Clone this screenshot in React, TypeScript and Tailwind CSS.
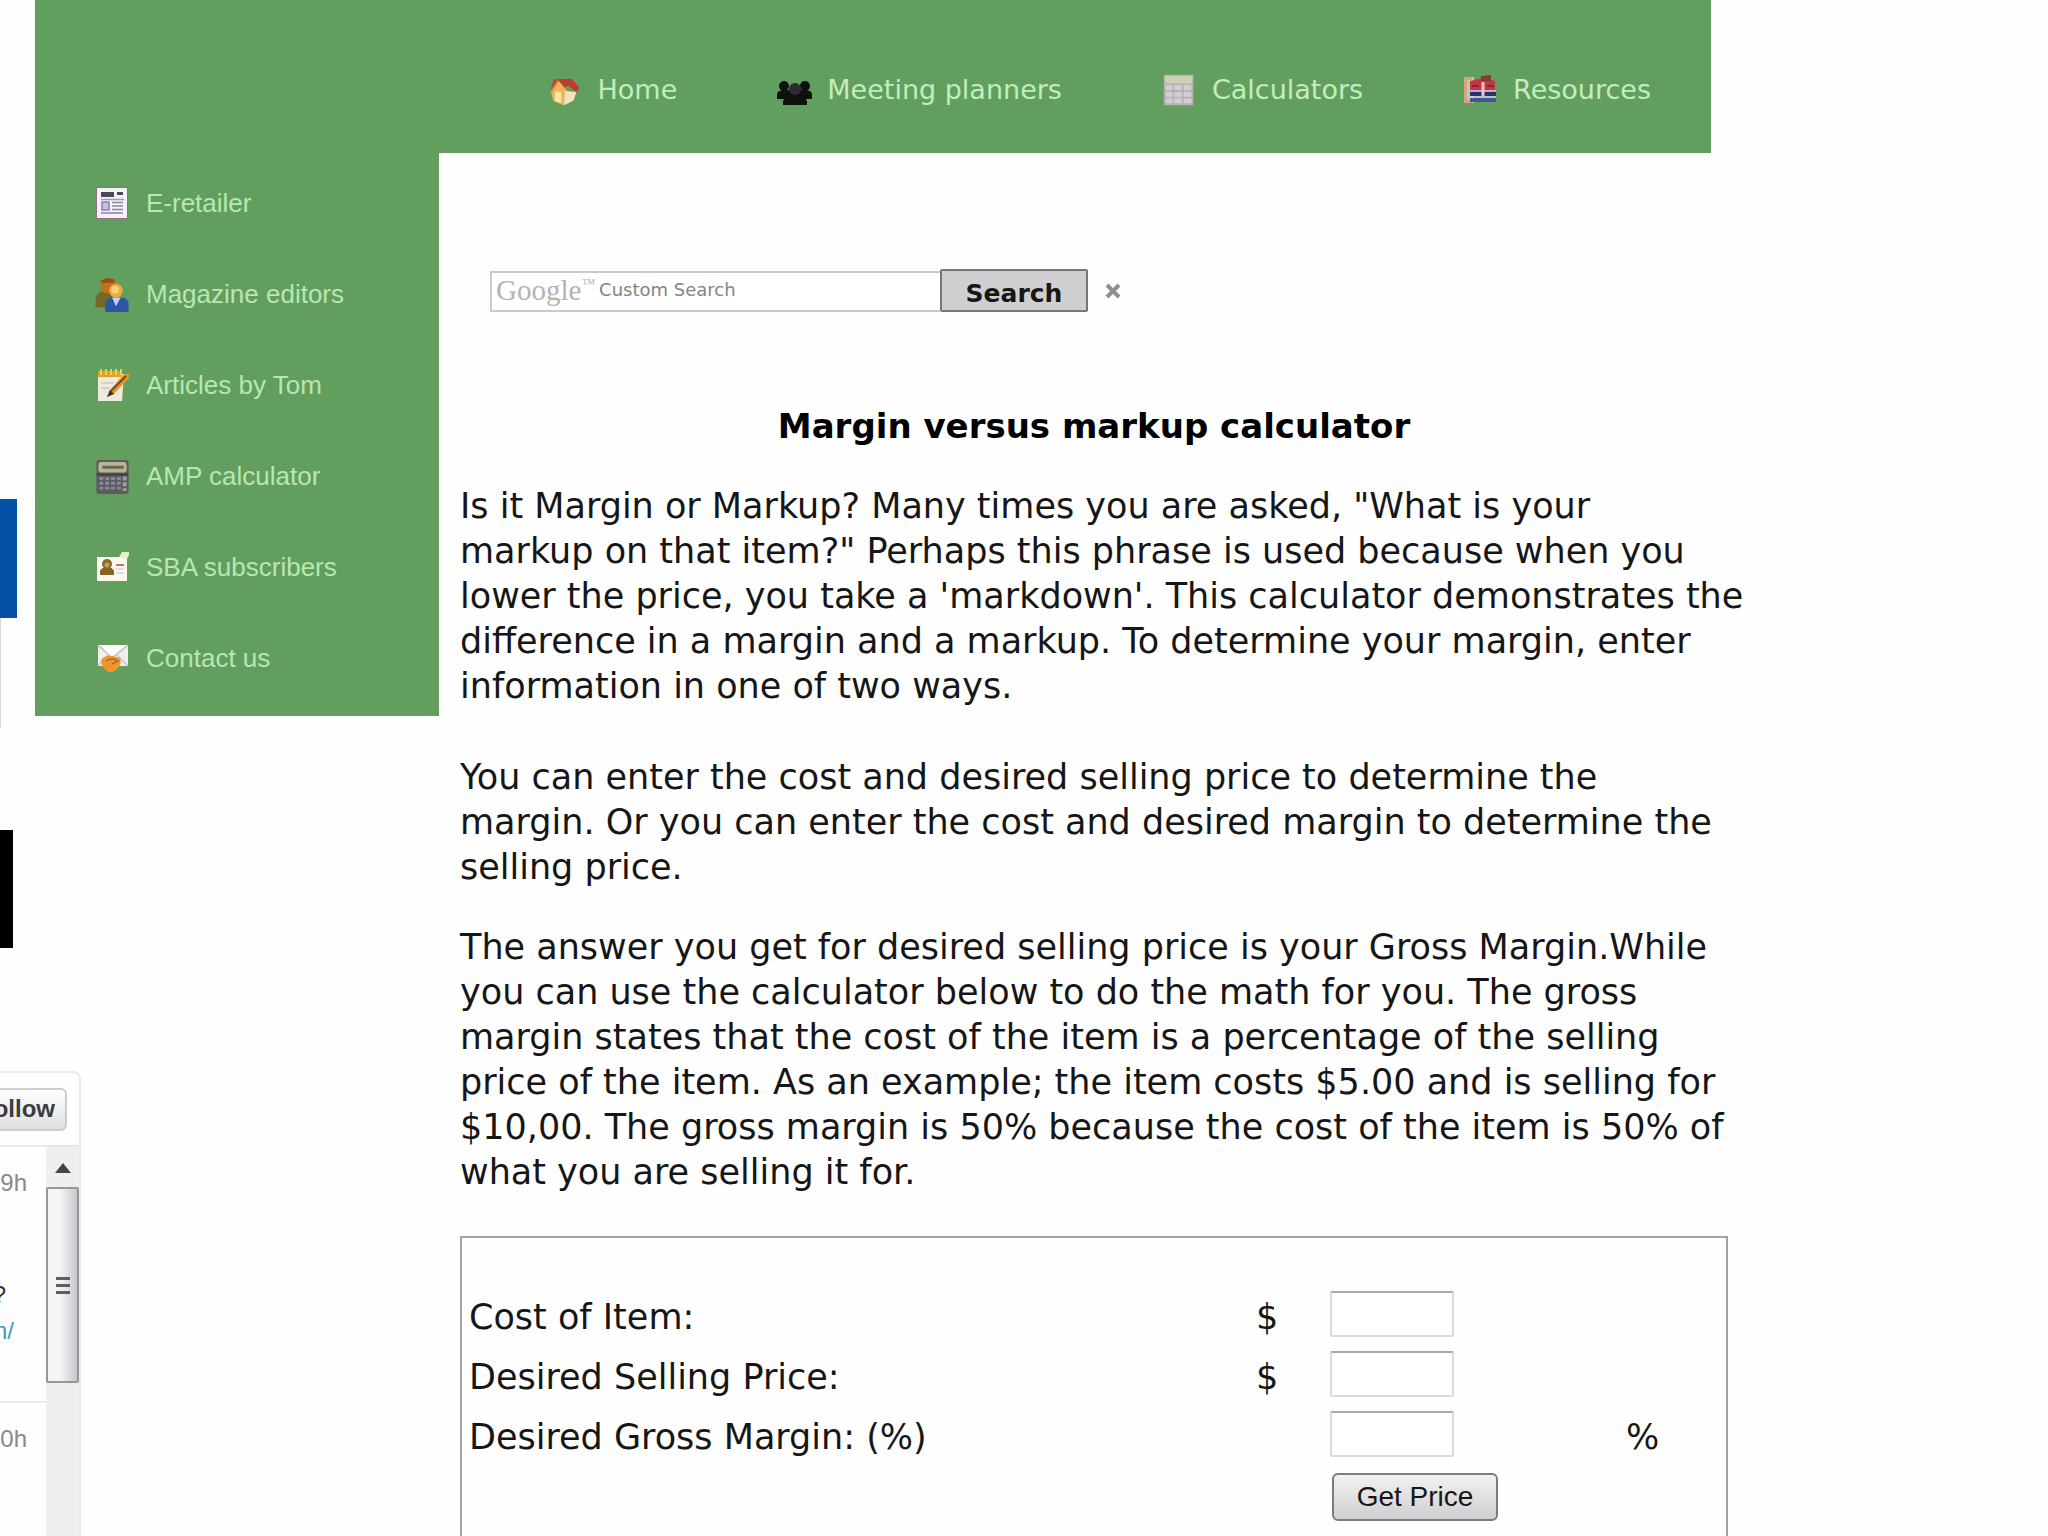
import type { FormEvent, ReactNode } from 'react';
import { useState } from 'react';

type NavItem = { label: string; icon: ReactNode };

const HomeIcon = () => (
  <svg viewBox="0 -1 38 38" className="size-9 shrink-0">
    <path d="M6 7 L24 6 L33 16 L31 19 L22 13 L8 20 L3 17 Z" fill="#b8412f" />
    <path d="M12 7 L25 6 L33 16 L30 20 Z" fill="#c13a30" />
    <path d="M11 8 L3 20 L6 30 L17 34 L21 20 Z" fill="#f0b25c" />
    <path d="M18 19 L30 20 L27 29 L17 34 Z" fill="#f6e3c4" />
    <path d="M8 19 L14 21 L14 32 L7 29 Z" fill="#fbe9a6" />
    <path d="M11 8 L3 20" stroke="#c98a4a" strokeWidth="2" />
  </svg>
);

const PeopleIcon = () => (
  <svg viewBox="0 0 36 36" className="size-9 shrink-0" fill="#0d120d">
    <circle cx="7" cy="14" r="5" />
    <circle cx="28" cy="14" r="5" />
    <path d="M0 27 V22 Q1 18 7 18 H28 Q34 18 35 22 V27 Z" />
    <circle cx="18" cy="17" r="6" fill="#2a2c31" />
    <path d="M6 33 V29 Q8 23 18 23 Q28 23 30 29 V33 Z" />
  </svg>
);

const SheetIcon = () => (
  <svg viewBox="0 0 38 38" className="size-9 shrink-0">
    <rect x="2" y="3" width="31" height="32" rx="1" fill="#b7b3b4" />
    <rect x="3" y="4" width="29" height="8" fill="#cfcfb9" />
    <path d="M4 14h7v5H4zM13 14h8v5h-8zM23 14h8v5h-8zM4 21h7v5H4zM13 21h8v5h-8zM23 21h8v5h-8zM4 28h7v5H4zM13 28h8v5h-8zM23 28h8v5h-8z" fill="#d3cdd8" />
  </svg>
);

const BooksIcon = () => (
  <svg viewBox="0 0 36 36" className="size-9 shrink-0">
    <path d="M1 5 H11 V31 H1 Z" fill="#c8c7a0" />
    <path d="M1 5 H9 V8 H4 V28 H9 V31 H1 Z" fill="#d9a282" />
    <path d="M7 9 L20 6 L32 9 V20 H7 Z" fill="#c93444" />
    <path d="M18 4 L28 3 V9 H18 Z" fill="#8b3a2c" />
    <path d="M7 19 H33 V24 H7 Z" fill="#25346f" />
    <path d="M7 26 H33 V30 H7 Z" fill="#3f5596" />
    <path d="M7 19 H33 M7 25 H33" stroke="#d9d5e6" strokeWidth="1.500" />
    <path d="M20 10 V24" stroke="#e8c4cc" strokeWidth="3" />
    <path d="M9 14 H16 M24 14 H31" stroke="#792b4d" strokeWidth="2" />
  </svg>
);

const NewspaperIcon = () => (
  <svg viewBox="0 0 36 36" className="size-9 shrink-0">
    <rect x="1" y="2" width="32" height="32" rx="1" fill="#8f6f86" />
    <rect x="2" y="3" width="30" height="30" fill="#f5f2f7" />
    <path d="M6 7 H19 V12 H6 Z M22 7 H28 V10 H22 Z" fill="#4a4a55" />
    <path d="M6 14.500 H29" stroke="#a79cb5" strokeWidth="1.500" />
    <rect x="7" y="17" width="7" height="8" fill="#c7bfe3" stroke="#8a80b4" strokeWidth="1.500" />
    <path d="M17 17.500 H28 M17 21 H28 M17 24.500 H28 M6 28 H28" stroke="#8d84a2" strokeWidth="1.500" />
  </svg>
);

const EditorsIcon = () => (
  <svg viewBox="0 -1 36 37" className="size-9 shrink-0">
    <path d="M0 31 V23 Q1 16 7 15 L19 18 L13 31 Z" fill="#6f6a2a" />
    <path d="M5 4 Q12 -1 20 3 L21 13 Q14 20 6 15 Z" fill="#c5701c" />
    <path d="M5 4 Q13 -1 20 3 L18 6 H6 Z" fill="#9a4d12" />
    <path d="M10 36 V28 Q11 22 17 21 H28 Q34 22 34 28 V36 Z" fill="#2f55a5" />
    <path d="M17 21 L21 30 L26 21 Z" fill="#bcd5f2" />
    <circle cx="21" cy="14" r="7" fill="#f2a93b" />
    <circle cx="20" cy="13" r="4" fill="#f9cf7a" />
  </svg>
);

const NotepadIcon = () => (
  <svg viewBox="0 0 36 36" className="size-9 shrink-0">
    <path d="M3 7 H29 L27 34 H3 Z" fill="#efe9e0" />
    <path d="M3 4 H27 V10 H3 Z" fill="#e0a32a" />
    <path d="M6 2 V8 M11 2 V8 M16 2 V8 M21 2 V8 M26 2 V8" stroke="#f4cf4c" strokeWidth="2" />
    <path d="M6 16 H19 M6 21 H15" stroke="#cfc8c4" strokeWidth="1.500" />
    <path d="M34 7 L29 7 L15 23 L12 30 L19 27 L34 11 Z" fill="#e09a2c" />
    <path d="M31 9 L15 25" stroke="#7c4a1c" strokeWidth="2" />
    <path d="M15 23 L12 30 L19 27 Z" fill="#4b2f2a" />
  </svg>
);

const CalculatorIcon = () => (
  <svg viewBox="0 -1 36 37" className="size-9 shrink-0">
    <rect x="1" y="1" width="33" height="35" rx="2" fill="#5c5c5e" />
    <rect x="3" y="3" width="29" height="11" rx="3" fill="#b7b492" />
    <path d="M7 8.500 H29" stroke="#6a6553" strokeWidth="3" />
    <path d="M1 16 H34" stroke="#3f4146" strokeWidth="2" />
    <path d="M4 20 H26 M4 25 H26 M4 30 H26" stroke="#8a86a0" strokeWidth="3" strokeDasharray="4 2" />
    <path d="M30 18 V33" stroke="#a39e9c" strokeWidth="4" strokeDasharray="4 2" />
  </svg>
);

const CardIcon = () => (
  <svg viewBox="0 0 36 36" className="size-9 shrink-0">
    <path d="M2 8 H32 V32 H2 Z" fill="#fbf8ef" />
    <path d="M24 8 L27 3 L34 3 L34 6 L32 10 Z" fill="#dff3c0" />
    <circle cx="12" cy="15" r="5" fill="#8a6a24" />
    <path d="M5 26 V22 Q7 18 12 18 Q17 18 19 22 V26 Z" fill="#84651f" />
    <circle cx="12" cy="16" r="2.500" fill="#c79f5b" />
    <path d="M21 16 H29" stroke="#c76f5e" strokeWidth="2" />
    <path d="M21 20 H29 M21 24 H29" stroke="#d8d2d2" strokeWidth="1.500" />
  </svg>
);

const MailIcon = () => (
  <svg viewBox="0 0 36 36" className="size-9 shrink-0">
    <path d="M3 5 H33 V26 H3 Z" fill="#f1eeee" />
    <path d="M3 5 L17 18 L33 5" fill="#fdfdfd" stroke="#c9bcb8" strokeWidth="1.500" />
    <path d="M3 26 L13 15 M33 26 L22 15" stroke="#cfc5c2" strokeWidth="1.500" />
    <path d="M6 20 Q10 15 18 16 L25 18 Q27 23 23 28 Q19 33 14 32 Q7 30 6 20 Z" fill="#ef942e" />
    <path d="M11 21 Q17 17 23 21 L17 24" fill="none" stroke="#b9681c" strokeWidth="1.500" />
  </svg>
);

const TOP_LINKS: NavItem[] = [
  { label: 'Home', icon: <HomeIcon /> },
  { label: 'Meeting planners', icon: <PeopleIcon /> },
  { label: 'Calculators', icon: <SheetIcon /> },
  { label: 'Resources', icon: <BooksIcon /> },
];

const SIDE_LINKS: NavItem[] = [
  { label: 'E-retailer', icon: <NewspaperIcon /> },
  { label: 'Magazine editors', icon: <EditorsIcon /> },
  { label: 'Articles by Tom', icon: <NotepadIcon /> },
  { label: 'AMP calculator', icon: <CalculatorIcon /> },
  { label: 'SBA subscribers', icon: <CardIcon /> },
  { label: 'Contact us', icon: <MailIcon /> },
];

const FIELDS = [
  { id: 'cost', label: 'Cost of Item:', prefix: '$', suffix: '' },
  { id: 'price', label: 'Desired Selling Price:', prefix: '$', suffix: '' },
  { id: 'margin', label: 'Desired Gross Margin: (%)', prefix: '', suffix: '%' },
];

// Twitter timeline, cut off by the left edge of the window
function Timeline() {
  return (
    <section className="flex w-[81px] flex-1 flex-col overflow-hidden rounded-tr-lg border-t-2 border-r-2 border-[#ebe9ed] font-['Liberation_Sans',Arial,sans-serif]">
      <div className="flex h-[74px] shrink-0 items-center justify-end border-b-2 border-[#e9e7ea] pr-3">
        <button className="flex h-[43px] w-24 shrink-0 items-center justify-end rounded-md border-2 border-[#cfcdd0] bg-linear-to-b from-white to-[#dedde0] pr-[10px] text-2xl font-bold text-[#3c3b3e]">
          Follow
        </button>
      </div>
      <div className="flex flex-1">
        <div className="flex w-[46px] shrink-0 flex-col text-2xl text-[#8a898c]">
          <div className="flex h-[256px] flex-col items-end border-b-2 border-[#e6e9ee] pt-5">
            <span className="pr-[19px]">9h</span>
            <span className="pt-20 pr-10 text-[#333]">?</span>
            <a href="#link" className="pt-1 pr-8 text-[#3d9ec0]">n/</a>
          </div>
          <span className="self-end pt-5 pr-[19px]">0h</span>
        </div>
        <div className="flex flex-1 flex-col items-center bg-[#f0eef1]">
          <svg viewBox="0 0 16 10" className="mt-4 h-[10px] w-4 shrink-0">
            <path d="M0 10 L8 0 L16 10 Z" fill="#454447" />
          </svg>
          <div className="mt-[14px] flex h-[196px] w-full shrink-0 flex-col items-center justify-center gap-1 rounded-xs border-2 border-[#98969a] bg-linear-to-r from-[#f5f4f6] from-40% to-[#c9c7cb]">
            <span className="h-[3px] w-[14px] bg-[#5f5e62]" />
            <span className="h-[3px] w-[14px] bg-[#5f5e62]" />
            <span className="h-[3px] w-[14px] bg-[#5f5e62]" />
          </div>
        </div>
      </div>
    </section>
  );
}

function LeftRail() {
  return (
    <div className="flex w-[35px] shrink-0 flex-col">
      <div className="mt-[499px] h-[119px] w-[17px] bg-[#0552a5]" />
      <div className="h-[110px] w-px bg-[#d9d7dc]" />
      <div className="mt-[102px] mb-[123px] h-[118px] w-[13px] bg-black" />
      <Timeline />
    </div>
  );
}

function SearchBar() {
  const [query, setQuery] = useState('');

  return (
    <form className="flex items-end pl-[30px]" onSubmit={(e: FormEvent) => e.preventDefault()}>
      <label className="flex h-[41px] w-[450px] items-center border-2 border-r-0 border-[#cbc9cc] bg-white pb-1 pl-1">
        <span className="flex items-start font-['Liberation_Serif',serif] text-[29px] leading-8 text-[#b3b2b4]">
          Google<span className="text-sm leading-5">™</span>
        </span>
        <input
          value={query}
          onChange={(e) => setQuery(e.target.value)}
          placeholder="Custom Search"
          aria-label="Google Custom Search"
          className="ml-1 w-0 flex-1 text-lg outline-none placeholder:text-[#858486]"
        />
      </label>
      <button className="h-[43px] w-[148px] rounded-xs border-2 border-[#777579] bg-[#cfced0] text-[25px] font-bold">
        Search
      </button>
      <button type="button" aria-label="Clear" className="mb-3 ml-4" onClick={() => setQuery('')}>
        <svg viewBox="0 0 18 18" className="size-[18px]">
          <path d="M3 3 L15 15 M15 3 L3 15" stroke="#8f8e91" strokeWidth="4" />
        </svg>
      </button>
    </form>
  );
}

function MarginForm() {
  return (
    <form
      className="mt-[41px] flex-1 border-2 border-b-0 border-[#a3a1a5] pt-[49px] pl-[7px]"
      onSubmit={(e: FormEvent) => e.preventDefault()}
    >
      {FIELDS.map((field) => (
        <div key={field.id} className="grid h-[60px] grid-cols-[1fr_74px_296px_100px] items-center">
          <label htmlFor={field.id}>{field.label}</label>
          <span>{field.prefix}</span>
          <input
            id={field.id}
            className="mt-1 h-[46px] w-[124px] self-start rounded-xs border-2 border-[#dddbe0] border-t-[#aaa8ad] bg-white px-2 text-2xl"
          />
          <span>{field.suffix}</span>
        </div>
      ))}
      <div className="grid h-[60px] grid-cols-[1fr_396px] items-center">
        <button className="col-start-2 ml-[2px] h-12 w-[166px] rounded-md border-2 border-[#7d7b7f] bg-linear-to-b from-[#f3f2f3] to-[#cfced0] font-['Liberation_Sans',Arial,sans-serif] text-[28px] leading-8">
          Get Price
        </button>
      </div>
    </form>
  );
}

export default function App() {
  return (
    <div className="flex h-screen overflow-hidden bg-[#fefefe] pr-80 font-['DejaVu_Sans',Verdana,sans-serif] text-[#161616]">
      <LeftRail />
      <div className="flex min-w-0 flex-1 flex-col">
        <header className="mr-[17px] flex h-[153px] shrink-0 items-start justify-end bg-[#629f5f] pt-[72px] pr-[60px]">
          <nav className="flex gap-[100px] text-[27px] leading-9 text-[#c3edbd]">
            {TOP_LINKS.map((item) => (
              <a key={item.label} href="#top" className="flex items-center gap-[14px] whitespace-nowrap">
                {item.icon}
                {item.label}
              </a>
            ))}
          </nav>
        </header>
        <div className="flex flex-1">
          <aside className="h-[563px] w-[404px] shrink-0 bg-[#629f5f] pt-1 pl-[60px]">
            <nav className="flex flex-col font-['Liberation_Sans',Arial,sans-serif] text-[26px] leading-9 text-[#b9e6b2]">
              {SIDE_LINKS.map((item) => (
                <a key={item.label} href="#side" className="flex h-[91px] items-center gap-[15px]">
                  {item.icon}
                  {item.label}
                </a>
              ))}
            </nav>
          </aside>
          <main className="flex min-w-0 flex-1 flex-col pt-[116px] pl-[21px] text-[35px] leading-[45px] whitespace-nowrap">
            <SearchBar />
            <h1 className="mt-[92px] mb-[35px] text-center text-[34px] font-bold text-black">
              Margin versus markup calculator
            </h1>
            <p>
              Is it Margin or Markup? Many times you are asked, "What is your
              <br />
              markup on that item?" Perhaps this phrase is used because when you
              <br />
              lower the price, you take a 'markdown'. This calculator demonstrates the
              <br />
              difference in a margin and a markup. To determine your margin, enter
              <br />
              information in one of two ways.
            </p>
            <p className="mt-[46px]">
              You can enter the cost and desired selling price to determine the
              <br />
              margin. Or you can enter the cost and desired margin to determine the
              <br />
              selling price.
            </p>
            <p className="mt-[35px]">
              The answer you get for desired selling price is your Gross Margin.While
              <br />
              you can use the calculator below to do the math for you. The gross
              <br />
              margin states that the cost of the item is a percentage of the selling
              <br />
              price of the item. As an example; the item costs $5.00 and is selling for
              <br />
              $10,00. The gross margin is 50% because the cost of the item is 50% of
              <br />
              what you are selling it for.
            </p>
            <MarginForm />
          </main>
        </div>
      </div>
    </div>
  );
}
